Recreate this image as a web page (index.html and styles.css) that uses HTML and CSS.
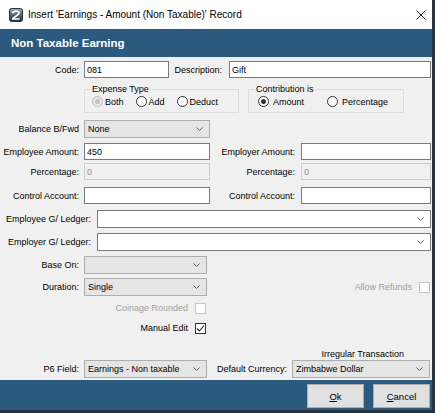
FILE: index.html
```html
<!DOCTYPE html>
<html lang="en">
<head>
<meta charset="utf-8">
<title>Insert Record</title>
<link rel="stylesheet" href="styles.css">
</head>
<body>
<div class="window">
  <div class="titlebar">
    <svg class="app-icon" width="14" height="14" viewBox="0 0 14 14">
      <defs>
        <linearGradient id="ig" x1="0" y1="0" x2="0" y2="1">
          <stop offset="0" stop-color="#9aa7b3"/>
          <stop offset="0.5" stop-color="#55667a"/>
          <stop offset="1" stop-color="#1f2e3d"/>
        </linearGradient>
      </defs>
      <rect x="0.5" y="0.5" width="13" height="13" rx="2" fill="url(#ig)" stroke="#2a3846"/>
      <path d="M3.6 5.2 C4.2 2.6 9.8 2.4 10 5 C10.2 7.2 5.5 8.2 3.6 11 L10.6 11" fill="none" stroke="#fff" stroke-width="1.7" stroke-linejoin="round"/>
    </svg>
    <span class="title">Insert 'Earnings - Amount (Non Taxable)' Record</span>
    <svg class="close" width="10" height="10" viewBox="0 0 10 10">
      <path d="M0.5 0.5 L9.5 9.5 M9.5 0.5 L0.5 9.5" stroke="#222" stroke-width="1"/>
    </svg>
  </div>

  <div class="header">Non Taxable Earning</div>

  <div class="form">
    <div class="row r-code">
      <span class="lbl w79">Code:</span>
      <span class="tb ml5 w85">081</span>
      <span class="lbl w53">Description:</span>
      <span class="tb ml7 w202">Gift</span>
    </div>

    <div class="row r-groups">
      <fieldset class="grp g1">
        <legend>Expense Type</legend>
        <div class="radios">
          <span class="opt"><span class="radio dis-on"></span>Both</span>
          <span class="opt"><span class="radio"></span>Add</span>
          <span class="opt"><span class="radio"></span>Deduct</span>
        </div>
      </fieldset>
      <fieldset class="grp g2">
        <legend>Contribution is</legend>
        <div class="radios">
          <span class="opt"><span class="radio on"></span>Amount</span>
          <span class="opt"><span class="radio"></span>Percentage</span>
        </div>
      </fieldset>
    </div>

    <div class="row r-bal">
      <span class="lbl w79">Balance B/Fwd</span>
      <span class="cb grey ml5 w126"><span class="val">None</span><svg class="arr" width="7" height="4" viewBox="0 0 7 4"><polyline points="0.5,0.5 3.5,3.5 6.5,0.5"/></svg></span>
    </div>

    <div class="row r-amt">
      <span class="lbl w79">Employee Amount:</span>
      <span class="tb ml5 w126">450</span>
      <span class="lbl w85">Employer Amount:</span>
      <span class="tb ml6 w130"></span>
    </div>

    <div class="row r-pct">
      <span class="lbl w79">Percentage:</span>
      <span class="tb dis ml5 w126">0</span>
      <span class="lbl w85">Percentage:</span>
      <span class="tb dis ml6 w130">0</span>
    </div>

    <div class="row r-ctl">
      <span class="lbl w79">Control Account:</span>
      <span class="tb ml5 w126"></span>
      <span class="lbl w85">Control Account:</span>
      <span class="tb ml6 w130"></span>
    </div>

    <div class="row r-gl1">
      <span class="lbl w91">Employee G/ Ledger:</span>
      <span class="cb white ml6 w334"><span class="val"></span><svg class="arr" width="7" height="4" viewBox="0 0 7 4"><polyline points="0.5,0.5 3.5,3.5 6.5,0.5"/></svg></span>
    </div>

    <div class="row r-gl2">
      <span class="lbl w91">Employer G/ Ledger:</span>
      <span class="cb white ml6 w334"><span class="val"></span><svg class="arr" width="7" height="4" viewBox="0 0 7 4"><polyline points="0.5,0.5 3.5,3.5 6.5,0.5"/></svg></span>
    </div>

    <div class="row r-base">
      <span class="lbl w79">Base On:</span>
      <span class="cb grey ml5 w123"><span class="val"></span><svg class="arr" width="7" height="4" viewBox="0 0 7 4"><polyline points="0.5,0.5 3.5,3.5 6.5,0.5"/></svg></span>
    </div>

    <div class="row r-dur">
      <span class="lbl w79">Duration:</span>
      <span class="cb grey ml5 w123"><span class="val">Single</span><svg class="arr" width="7" height="4" viewBox="0 0 7 4"><polyline points="0.5,0.5 3.5,3.5 6.5,0.5"/></svg></span>
      <span class="refund">
        <span class="muted">Allow Refunds</span>
        <span class="chk dis ml7"></span>
      </span>
    </div>

    <div class="row r-coin">
      <span class="lbl w188 muted">Coinage Rounded</span>
      <span class="chk dis ml7"></span>
    </div>

    <div class="row r-man">
      <span class="lbl w188">Manual Edit</span>
      <span class="chk ml7"><svg width="9" height="9" viewBox="0 0 9 9"><polyline points="1,4.5 3.4,7 8,1.5"/></svg></span>
    </div>

    <div class="row r-irr">
      <span class="irr">Irregular Transaction</span>
    </div>

    <div class="row r-p6">
      <span class="lbl w79">P6 Field:</span>
      <span class="cb grey ml5 w123"><span class="val">Earnings - Non taxable</span><svg class="arr" width="7" height="4" viewBox="0 0 7 4"><polyline points="0.5,0.5 3.5,3.5 6.5,0.5"/></svg></span>
      <span class="lbl w80">Default Currency:</span>
      <span class="cb grey ml5 w138"><span class="val">Zimbabwe Dollar</span><svg class="arr" width="7" height="4" viewBox="0 0 7 4"><polyline points="0.5,0.5 3.5,3.5 6.5,0.5"/></svg></span>
    </div>
  </div>

  <div class="footer">
    <span class="btn"><u>O</u>k</span>
    <span class="btn"><u>C</u>ancel</span>
  </div>
</div>
</body>
</html>
```

FILE: styles.css
```css
* { box-sizing: border-box; }

body {
  margin: 0;
  background: #26323d;
  font-family: "Liberation Sans", Arial, sans-serif;
  font-size: 9px;
  color: #000;
}

.window {
  width: 432px;
  height: 410px;
  display: flex;
  flex-direction: column;
  background: #f0f0f0;
}

.titlebar {
  height: 29px;
  flex: none;
  background: #fff;
  display: flex;
  align-items: center;
  padding: 0 6px 0 9px;
}
.app-icon { flex: none; }
.title {
  flex: 1;
  margin-left: 5px;
  font-size: 10px;
  white-space: nowrap;
}
.close { flex: none; }

.header {
  height: 28px;
  flex: none;
  background: #2c5a7e;
  color: #fff;
  font-weight: bold;
  font-size: 11.5px;
  display: flex;
  align-items: center;
  padding-left: 11px;
}

.form {
  flex: 1;
  display: flex;
  flex-direction: column;
  padding-top: 4px;
}

.row {
  display: flex;
  align-items: center;
  flex: none;
}

.lbl {
  flex: none;
  text-align: right;
  white-space: nowrap;
}
.w53 { width: 53px; }
.w79 { width: 79px; }
.w80 { width: 80px; }
.w85 { width: 85px; }
.w91 { width: 91px; }
.w188 { width: 188px; }

.ml5 { margin-left: 5px; }
.ml6 { margin-left: 6px; }
.ml7 { margin-left: 7px; }

.w85.tb { width: 85px; }
.w123 { width: 123px; }
.w126 { width: 126px; }
.w130 { width: 130px; }
.w138 { width: 138px; }
.w202 { width: 202px; }
.w334 { width: 334px; }

.tb {
  flex: none;
  height: 17px;
  background: #fff;
  border: 1px solid #7a7a7a;
  padding-left: 2px;
  display: flex;
  align-items: center;
  white-space: nowrap;
}
.tb.dis {
  background: #f0f0f0;
  border-color: #cccccc;
  color: #8d8d8d;
}

.cb {
  flex: none;
  height: 18px;
  display: flex;
  align-items: center;
  padding-left: 3px;
  padding-right: 6px;
  white-space: nowrap;
}
.cb.grey {
  background: #e5e5e5;
  border: 1px solid #adadad;
}
.cb.white {
  background: #fff;
  border: 1px solid #7a7a7a;
}
.cb .val { flex: 1; overflow: hidden; }
.arr { flex: none; }
.arr polyline { fill: none; stroke: #606060; stroke-width: 1; }

/* group boxes */
.r-groups { margin-top: 6px; padding-left: 84px; }
.grp {
  margin: 0;
  border: 1px solid #dcdcdc;
  padding: 1px 0 4px 6px;
  height: 29px;
}
.grp legend {
  padding: 0 1px;
  line-height: 11px;
  font-size: 9px;
}
.g1 { width: 155px; }
.g2 { width: 156px; margin-left: 9px; }
.radios {
  display: flex;
  align-items: center;
  height: 11px;
}
.g1 .radios { gap: 12px; padding-left: 1px; }
.g2 .radios { gap: 23px; padding-left: 3px; }
.opt {
  display: flex;
  align-items: center;
  white-space: nowrap;
}
.g1 .opt { gap: 2px; }
.g2 .opt { gap: 4px; }

.radio {
  flex: none;
  width: 11px;
  height: 11px;
  border-radius: 50%;
  border: 1px solid #333;
  background: #fff;
  display: flex;
  align-items: center;
  justify-content: center;
}
.radio.on::after {
  content: "";
  width: 5px;
  height: 5px;
  border-radius: 50%;
  background: #333;
}
.radio.dis-on {
  border-color: #bcbcbc;
  background: #e8e8e8;
}
.radio.dis-on::after {
  content: "";
  width: 5px;
  height: 5px;
  border-radius: 50%;
  background: #c4c4c4;
}

/* checkboxes */
.chk {
  flex: none;
  width: 11px;
  height: 11px;
  background: #fff;
  border: 1px solid #333;
  display: flex;
  align-items: center;
  justify-content: center;
}
.chk.dis { border-color: #c4c4c4; }
.chk polyline { fill: none; stroke: #222; stroke-width: 1.1; }

.muted { color: #a0a0a0; }

.refund {
  margin-left: auto;
  margin-right: 2px;
  display: flex;
  align-items: center;
  white-space: nowrap;
}

/* vertical rhythm */
.r-bal { margin-top: 7px; }
.r-amt { margin-top: 5px; }
.r-pct { margin-top: 3px; }
.r-ctl { margin-top: 7px; }
.r-gl1 { margin-top: 6px; }
.r-gl2 { margin-top: 5px; }
.r-base { margin-top: 5px; }
.r-dur { margin-top: 4px; }
.r-coin { margin-top: 6px; height: 12px; }
.r-man { margin-top: 8px; height: 12px; }
.r-irr {
  margin-top: 14px;
  height: 11px;
  justify-content: flex-end;
  padding-right: 28px;
}
.r-p6 { margin-top: 1px; }

.footer {
  height: 30px;
  flex: none;
  background: #2c5a7e;
  display: flex;
  justify-content: flex-end;
  align-items: flex-start;
  gap: 9px;
  padding: 4px 2px 0 0;
}
.btn {
  width: 57px;
  height: 24px;
  background: #e1e1e1;
  border: 1px solid #adadad;
  display: flex;
  align-items: center;
  justify-content: center;
  font-size: 9.5px;
}
```
